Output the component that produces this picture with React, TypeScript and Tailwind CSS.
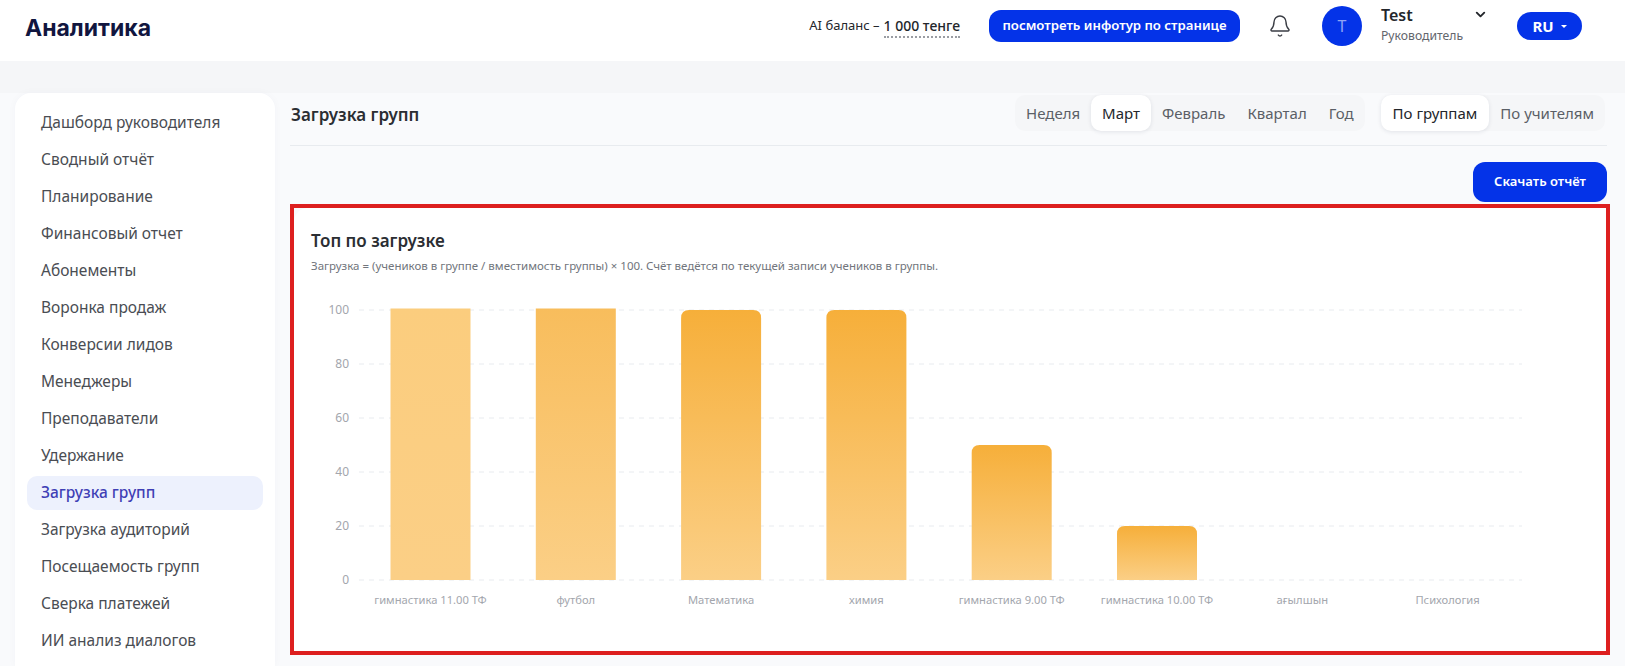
import { Bell, ChevronDown } from "lucide-react";

const menu = [
  "Дашборд руководителя",
  "Сводный отчёт",
  "Планирование",
  "Финансовый отчет",
  "Абонементы",
  "Воронка продаж",
  "Конверсии лидов",
  "Менеджеры",
  "Преподаватели",
  "Удержание",
  "Загрузка групп",
  "Загрузка аудиторий",
  "Посещаемость групп",
  "Сверка платежей",
  "ИИ анализ диалогов",
];

const ticks = [100, 80, 60, 40, 20, 0];
const cats = [
  { label: "гимнастика 11.00 ТФ", value: 100, grad: "g1", flat: true },
  { label: "футбол", value: 100, grad: "g2", flat: true },
  { label: "Математика", value: 100, grad: "g3", flat: false },
  { label: "химия", value: 100, grad: "g3", flat: false },
  { label: "гимнастика 9.00 ТФ", value: 50, grad: "g3", flat: false },
  { label: "гимнастика 10.00 ТФ", value: 20, grad: "g3", flat: false },
  { label: "ағылшын", value: 0, grad: "g3", flat: false },
  { label: "Психология", value: 0, grad: "g3", flat: false },
];

function Chart() {
  const ox = 47;
  const base = 289;
  const unit = 2.7;
  const step = 145.3;
  return (
    <svg width="1290" height="340" className="block" style={{ fontFamily: "'Noto Sans', sans-serif" }}>
      <defs>
        <linearGradient id="g1" x1="0" y1="0" x2="0" y2="1">
          <stop offset="0%" stopColor="#fbcd7e" />
          <stop offset="100%" stopColor="#fbcf86" />
        </linearGradient>
        <linearGradient id="g2" x1="0" y1="0" x2="0" y2="1">
          <stop offset="0%" stopColor="#f8bd5c" />
          <stop offset="100%" stopColor="#fbcf86" />
        </linearGradient>
        <linearGradient id="g3" x1="0" y1="0" x2="0" y2="1">
          <stop offset="0%" stopColor="#f6af3a" />
          <stop offset="100%" stopColor="#fbcf86" />
        </linearGradient>
      </defs>
      {ticks.map((t) => {
        const y = base - t * unit;
        return (
          <g key={t}>
            <line x1={ox} x2={ox + 1163} y1={y} y2={y} stroke="#e8ebef" strokeDasharray="5 5" />
            <text x={ox - 10} y={y + 4} textAnchor="end" fontSize="12" fill="#a3a6ad">
              {t}
            </text>
          </g>
        );
      })}
      {cats.map((c, i) => {
        const cx = ox + step * i + 71.5;
        const top = c.flat ? base - 271.5 : base - c.value * unit;
        const x = cx - 40;
        const r = 8;
        return (
          <g key={c.label}>
            {c.value > 0 &&
              (c.flat ? (
                <rect x={x} y={top} width="80" height={base - top} fill={`url(#${c.grad})`} />
              ) : (
                <path
                  d={`M${x} ${base}V${top + r}Q${x} ${top} ${x + r} ${top}H${x + 80 - r}Q${x + 80} ${top} ${x + 80} ${top + r}V${base}Z`}
                  fill={`url(#${c.grad})`}
                />
              ))}
            <text x={cx} y={base + 24} textAnchor="middle" fontSize="11.2" fill="#a3a6ad">
              {c.label}
            </text>
          </g>
        );
      })}
    </svg>
  );
}

function Segment({ items, active }: { items: string[]; active: string }) {
  return (
    <div className="flex h-[36px] rounded-[10px] bg-[#f5f6f8]">
      {items.map((t) => (
        <div
          key={t}
          className={
            t === active
              ? t === "По группам"
                ? "flex items-center rounded-[10px] bg-white px-[12px] text-[#23262b] shadow-[0_1px_4px_rgba(20,30,60,0.10)]"
                : "flex items-center rounded-[10px] bg-white px-[11px] text-[#23262b] shadow-[0_1px_4px_rgba(20,30,60,0.10)]"
              : "flex items-center px-[11px] text-[#5b5f66]"
          }
        >
          {t}
        </div>
      ))}
    </div>
  );
}

export default function App() {
  return (
    <div
      className="flex h-[666px] w-full flex-col overflow-hidden bg-[#f5f6f8]"
      style={{ fontFamily: "'Noto Sans', sans-serif" }}
    >
      <header className="flex h-[61px] shrink-0 items-center bg-white pb-[9px] pl-[25px] pr-[43px]">
        <div className="mt-[4px] text-[23px] font-bold leading-none text-[#11163f]" style={{ fontFamily: "Inter, sans-serif" }}>
          Аналитика
        </div>
        <div className="ml-auto flex items-center">
          <div className="flex items-center text-[13px] text-[#23262b]">
            <span>AI баланс –</span>
            <span className="ml-[4px] border-b-2 border-dotted border-[#9a9da3] text-[14px] font-medium leading-[21px]">1 000 тенге</span>
          </div>
          <button className="ml-[29px] h-[32px] w-[251px] rounded-[12px] bg-[#0433e8] text-[13.2px] font-semibold text-white">
            посмотреть инфотур по странице
          </button>
          <Bell className="ml-[28px] text-[#3a3d44]" size={24} strokeWidth={1.4} />
          <div className="ml-[30px] flex h-[40px] w-[40px] items-center justify-center rounded-full bg-[#0433e8] text-[16px] text-[#8fa4f5]">
            T
          </div>
          <div className="mb-[4px] ml-[19px] flex w-[112px] flex-col">
            <div className="flex items-center justify-between">
              <span className="text-[16px] font-semibold leading-[20px] text-[#23262b]">Test</span>
              <ChevronDown size={15} strokeWidth={3} className="mr-[5px] text-[#23262b]" />
            </div>
            <span className="mt-[3px] text-[12.2px] leading-[16px] text-[#63666d]">Руководитель</span>
          </div>
          <div className="ml-[24px] flex h-[28px] w-[65px] items-center justify-center gap-[7px] rounded-[14px] bg-[#0433e8] text-[15px] font-bold text-white">
            RU
            <span className="h-0 w-0 border-x-[3px] border-t-[3px] border-x-transparent border-t-white" />
          </div>
        </div>
      </header>

      <div className="mt-[32px] flex min-h-0 flex-1 bg-[#f9fafc] pl-[15px] pr-[15px]">
        <aside className="w-[260px] shrink-0 rounded-t-[16px] bg-white px-[12px] pt-[13px] shadow-[0_0_8px_rgba(30,40,80,0.03)]">
          {menu.map((m) => (
            <div
              key={m}
              className={
                m === "Загрузка групп"
                  ? "mb-[3px] flex h-[34px] items-center rounded-[10px] bg-[#edf1fd] pl-[14px] font-medium text-[#3f3fb5]"
                  : "mb-[3px] flex h-[34px] items-center pl-[14px] text-[#4a4d53]"
              }
              style={{ fontSize: "15.5px" }}
            >
              {m}
            </div>
          ))}
        </aside>

        <main className="ml-[15px] flex min-w-0 flex-1 flex-col">
          <div className="mr-[3px] flex h-[53px] items-start justify-between border-b border-[#e8ebef] pr-[2px] pt-[2px]">
            <h1 className="ml-[1px] mt-[8px] text-[17px] font-semibold leading-[24px] text-[#2b2e33]">Загрузка групп</h1>
            <div className="flex gap-[16px] text-[15px]">
              <Segment items={["Неделя", "Март", "Февраль", "Квартал", "Год"]} active="Март" />
              <Segment items={["По группам", "По учителям"]} active="По группам" />
            </div>
          </div>
          <div className="mr-[3px] mt-[16px] flex justify-end">
            <button className="h-[40px] w-[134px] rounded-[12px] bg-[#0433e8] text-[13px] font-semibold text-white">
              Скачать отчёт
            </button>
          </div>
          <section className="mt-[2px] h-[451px] border-4 border-[#dd1f1f]">
            <div className="h-full rounded-tl-[14px] bg-white pl-[17px] pt-[19px]">
              <h2 className="text-[17px] font-semibold leading-[28px] text-[#2b2e33]">Топ по загрузке</h2>
              <p className="mt-[3px] text-[11.5px] leading-[16px] text-[#71757c]">
                Загрузка = (учеников в группе / вместимость группы) × 100. Счёт ведётся по текущей записи учеников в группы.
              </p>
              <div className="ml-[1px] mt-[17px]">
                <Chart />
              </div>
            </div>
          </section>
        </main>
      </div>
    </div>
  );
}
